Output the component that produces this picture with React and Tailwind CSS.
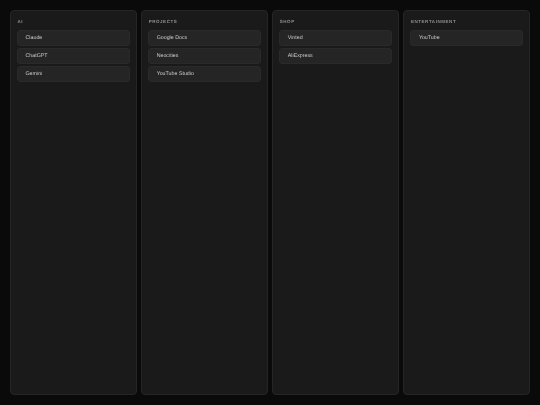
const columns = [
  { title: 'AI', items: ['Claude', 'ChatGPT', 'Gemini'] },
  { title: 'PROJECTS', items: ['Google Docs', 'Neocities', 'YouTube Studio'] },
  { title: 'SHOP', items: ['Vinted', 'AliExpress'] },
  { title: 'ENTERTAINMENT', items: ['YouTube'] },
];

const App = () => {
  return (
    <div className="h-[405px] w-[540px] overflow-hidden bg-[#0a0a0a] p-[10px] font-['Liberation_Sans',sans-serif] [text-rendering:geometricPrecision] [will-change:transform]">
      <div className="grid h-[385px] grid-cols-4 gap-[4.5px]">
        {columns.map(col => (
          <div key={col.title} className="rounded-[4px] border border-[#252525] bg-[#1a1a1a] px-[6px] pt-[7.5px]">
            <h2 className="mb-[5.5px] h-[6px] pl-[0.5px] text-[4.5px] leading-[6px] font-bold tracking-[0.55px] text-[#8f8f8f]">{col.title}</h2>
            <div className="flex flex-col gap-[2px]">
              {col.items.map(item => (
                <div key={item} className="flex h-[16px] items-center rounded-[3px] border border-[#2a2a2a] bg-[#252525] pt-[1px] pl-[7.5px] text-[5.3px] text-[#cccccc]">
                  {item}
                </div>
              ))}
            </div>
          </div>
        ))}
      </div>
    </div>
  );
};

export default App;
